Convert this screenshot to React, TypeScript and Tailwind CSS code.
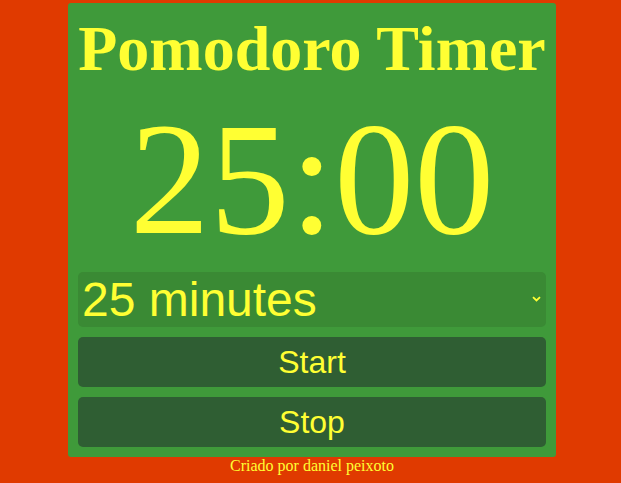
import { useState } from 'react';

const options = [25, 15, 5];

export default function App() {
  const [minutes, setMinutes] = useState(25);
  const [seconds] = useState(0);

  const pad = (n: number) => String(n).padStart(2, '0');

  return (
    <div className="min-h-[483px] bg-[#e03a00] pt-[3px] pl-[3px] flex flex-col items-center font-['Liberation_Serif',serif]">
      <div className="w-[488px] bg-[#3f9a3a] rounded-[3px] px-[10px] pt-[10px] pb-[10px] flex flex-col">
        <h1 className="text-center text-[64px] leading-[71px] font-bold text-[#ffff33]">Pomodoro Timer</h1>
        <div className="mt-[7px] text-center text-[160px] leading-[177px] text-[#ffff33]">
          {pad(minutes)}:{pad(seconds)}
        </div>

        <div className="relative mt-[4px]">
          <select
            value={minutes}
            onChange={(e) => setMinutes(Number(e.target.value))}
            className="w-full h-[55px] appearance-none bg-[#3a8a34] rounded-[5px] pl-[4px] text-[48px] leading-[55px] text-[#ffff33] font-['Liberation_Sans',Arial,sans-serif] outline-none"
          >
            {options.map((m) => (
              <option key={m} value={m}>
                {m} minutes
              </option>
            ))}
          </select>
          <svg
            className="absolute right-[5px] top-[24px] pointer-events-none"
            width="9"
            height="6"
            viewBox="0 0 9 6"
            fill="none"
          >
            <path d="M1 1.2 L4.5 4.5 L8 1.2" stroke="#ffff33" strokeWidth="1.8" />
          </svg>
        </div>

        <button className="mt-[10px] h-[50px] rounded-[5px] bg-[#2f5e33] text-[32px] text-[#ffff33] font-['Liberation_Sans',Arial,sans-serif]">
          Start
        </button>
        <button className="mt-[10px] h-[50px] rounded-[5px] bg-[#2f5e33] text-[32px] text-[#ffff33] font-['Liberation_Sans',Arial,sans-serif]">
          Stop
        </button>
      </div>
      <p className="text-[16px] leading-[18px] text-[#ffff33]">Criado por daniel peixoto</p>
    </div>
  );
}
